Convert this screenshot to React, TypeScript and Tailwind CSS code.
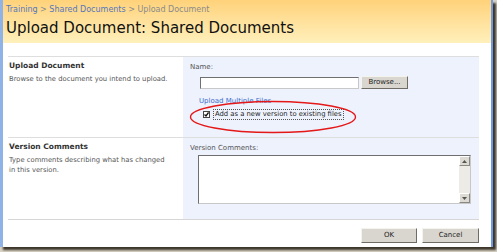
import React from 'react'

function XpButton({ label, className }: { label: string; className: string }) {
  return (
    <div
      className={`flex items-center justify-center border border-t-[#f4f3ee] border-l-[#f4f3ee] border-r-[#6f6c65] border-b-[#6f6c65] bg-[#d9d6cf] text-[7px] text-[#222] ${className}`}
    >
      {label}
    </div>
  )
}

function Scrollbar() {
  return (
    <div className="flex w-[11px] flex-col bg-[#ecebe6]">
      <div className="flex h-[10px] items-center justify-center border border-t-white border-l-white border-r-[#8a8882] border-b-[#8a8882] bg-[#dcdad3]">
        <svg width="5" height="3" viewBox="0 0 5 3">
          <path d="M0 3 L2.5 0 L5 3 Z" fill="#555" />
        </svg>
      </div>
      <div className="grow" />
      <div className="flex h-[10px] items-center justify-center border border-t-white border-l-white border-r-[#8a8882] border-b-[#8a8882] bg-[#dcdad3]">
        <svg width="5" height="3" viewBox="0 0 5 3">
          <path d="M0 0 L2.5 3 L5 0 Z" fill="#555" />
        </svg>
      </div>
    </div>
  )
}

export default function App() {
  return (
    <div className="h-[252px] w-[497px] overflow-hidden bg-[#d8d2c4]">
      <div className="flex h-[247px] w-[493px] flex-col border-l-[3px] border-r-[2px] border-l-[#8fb3e6] border-r-[#6d9ae0] bg-white shadow-[3px_3px_2px_#3c362b] [font-family:'DejaVu_Sans',sans-serif]">
        <header className="h-[43px] shrink-0 bg-gradient-to-b from-[#ffd27a] to-[#fff0bb] pl-[3px] pt-[5px]">
          <p className="text-[8px] leading-[10px] text-[#5577bb]">
            Training <span className="text-[#8a8a8a]">&gt;</span> Shared Documents{' '}
            <span className="text-[#8a8a8a]">&gt; Upload Document</span>
          </p>
          <h1 className="mt-[3px] text-[15px] leading-[20px] text-[#111]">
            Upload Document: Shared Documents
          </h1>
        </header>

        <div className="ml-[5px] mr-[12px] mt-[13px] flex grow flex-col">
          <div className="h-px bg-[#dedede]" />

          <section className="flex h-[80px]">
            <div className="w-[175px] shrink-0 pl-[1px] pt-[4px] [font-family:Tahoma,'DejaVu_Sans',sans-serif]">
              <h2 className="text-[7.5px] font-bold leading-[10px] text-[#333]">Upload Document</h2>
              <p className="mt-[3px] text-[6.8px] leading-[10px] text-[#555]">
                Browse to the document you intend to upload.
              </p>
            </div>
            <div className="relative grow bg-[#eef2fd] pl-[7px] pt-[6px]">
              <p className="text-[7px] leading-[9px] text-[#555]">Name:</p>
              <div className="ml-[10px] mt-[4px] flex items-center gap-[2px]">
                <div className="h-[12px] w-[159px] border border-t-[#6f6f6f] border-l-[#6f6f6f] border-r-[#c8c8c8] border-b-[#c8c8c8] bg-white" />
                <XpButton label="Browse..." className="h-[13px] w-[47px]" />
              </div>
              <p className="ml-[9px] mt-[8px] text-[7px] leading-[9px] text-[#3a6ccc]">
                Upload Multiple Files
              </p>
              <div className="ml-[13px] mt-[3px] flex items-center gap-[3px]">
                <div className="flex h-[7px] w-[7px] items-center justify-center border border-[#444] bg-white">
                  <svg width="5" height="5" viewBox="0 0 5 5">
                    <path d="M0.5 2.5 L2 4 L4.5 0.5" stroke="#111" strokeWidth="1.3" fill="none" />
                  </svg>
                </div>
                <span className="border border-dotted border-[#555] px-px text-[6.8px] leading-[9px] text-[#222]">
                  Add as a new version to existing files
                </span>
              </div>
              <svg
                className="absolute left-[6px] top-[43px]"
                width="168"
                height="34"
                viewBox="0 0 168 34"
              >
                <ellipse cx="84" cy="17" rx="82.5" ry="15.5" fill="none" stroke="#e41818" strokeWidth="1.4" />
              </svg>
            </div>
          </section>

          <div className="h-px bg-[#dedede]" />

          <section className="flex h-[81px]">
            <div className="w-[175px] shrink-0 pl-[1px] pt-[4px] [font-family:Tahoma,'DejaVu_Sans',sans-serif]">
              <h2 className="text-[7.5px] font-bold leading-[10px] text-[#333]">Version Comments</h2>
              <p className="mt-[3px] w-[157px] text-[6.8px] leading-[10px] text-[#555]">
                Type comments describing what has changed in this version.
              </p>
            </div>
            <div className="grow bg-[#eef2fd] pl-[7px] pt-[6px]">
              <p className="text-[7px] leading-[9px] text-[#555]">Version Comments:</p>
              <div className="ml-[8px] mt-[2px] flex h-[49px] w-[273px] border border-t-[#6f6f6f] border-l-[#6f6f6f] border-r-[#c8c8c8] border-b-[#c8c8c8] bg-white">
                <div className="grow" />
                <Scrollbar />
              </div>
            </div>
          </section>

          <div className="h-px bg-[#d6d6d6]" />

          <div className="mt-[8px] flex justify-end gap-[5px]">
            <XpButton label="OK" className="h-[15px] w-[56px]" />
            <XpButton label="Cancel" className="h-[15px] w-[57px]" />
          </div>
        </div>
      </div>
    </div>
  )
}
